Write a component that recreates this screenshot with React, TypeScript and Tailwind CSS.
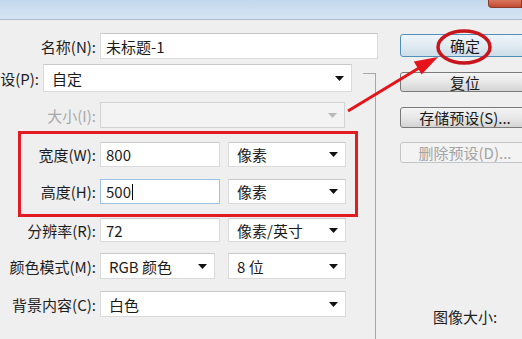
import React from "react";

const Arrow = ({ disabled = false }: { disabled?: boolean }) => (
  <svg width="9" height="5" viewBox="0 0 9 5" className="shrink-0 mr-[1px]">
    <path d="M0 0 L9 0 L4.5 5 Z" fill={disabled ? "#b9b9b9" : "#111"} />
  </svg>
);

const Input = ({ value, w, focused = false, h = "h-[25px]" }: { value: string; w: string; focused?: boolean; h?: string }) => (
  <div
    className={`${w} ${h} bg-white border flex items-center pl-[5px] text-[15px] text-[#1b1b1b] ${
      focused ? "border-[#9cc3e6] bg-[#fbfdff]" : "border-[#dadada] border-t-[#c9c9c9]"
    }`}
  >
    <span>{value}</span>
    {focused && <span className="w-px h-[16px] bg-black ml-px" />}
  </div>
);

const Select = ({ value, w, h = "h-[25px]", disabled = false }: { value: string; w: string; h?: string; disabled?: boolean }) => (
  <div
    className={`${w} ${h} border flex items-center justify-between pl-[8px] pr-[6px] text-[15px] ${
      disabled ? "bg-[#f3f3f3] border-[#d3d3d3] text-[#a0a0a0]" : "bg-white border-[#dadada] border-t-[#c9c9c9] text-[#1b1b1b]"
    }`}
  >
    <span className="whitespace-nowrap">{value}</span>
    <Arrow disabled={disabled} />
  </div>
);

const Label = ({ text, w, disabled = false }: { text: string; w: string; disabled?: boolean }) => (
  <div className={`${w} shrink-0 flex justify-end pr-[4px] whitespace-nowrap text-[15px] ${disabled ? "text-[#a8a8a8]" : "text-[#1e1e1e]"}`}>
    <span className="whitespace-nowrap">{text}</span>
  </div>
);

const Button = ({ text, h, variant = "normal", mt }: { text: string; h: string; variant?: "default" | "normal" | "disabled"; mt: string }) => {
  const cls =
    variant === "default"
      ? "border-[#4f90b8] bg-gradient-to-b from-[#eef5fa] via-[#e1ebf2] to-[#cfdde7] text-[#1a1a1a]"
      : variant === "disabled"
      ? "border-[#c3c6c8] bg-[#f3f3f3] text-[#a3a3a3]"
      : "border-[#7a7a7a] bg-gradient-to-b from-[#f4f4f4] via-[#e8e8e8] to-[#d4d4d4] text-[#1a1a1a]";
  return (
    <div className={`${mt} ${h} w-[130px] border rounded-[3px] flex items-center justify-center text-[15px] whitespace-nowrap ${cls}`}>
      {text}
    </div>
  );
};

export default function App() {
  return (
    <div className="relative w-[522px] h-[339px] overflow-hidden bg-[#efefef] font-['Noto_Sans_CJK_SC','Microsoft_YaHei',sans-serif] leading-none">
      {/* title bar */}
      <div className="h-[20px] bg-gradient-to-b from-[#c3d8ec] to-[#d5e4f2] border-b border-[#a9bccf] flex justify-end">
        <div className="w-[34px] h-[8px] bg-gradient-to-b from-[#d9765d] to-[#c2492f] border border-t-0 border-[#8a3a2a] rounded-bl-[4px]" />
      </div>

      <div className="flex pt-[13px]">
        {/* left column */}
        <div className="w-[378px] flex flex-col">
          {/* name row */}
          <div className="flex items-center">
            <Label text="名称(N):" w="w-[100px]" />
            <Input value="未标题-1" w="w-[278px]" h="h-[26px]" />
          </div>

          <div className="flex">
            <div className="w-[363px] flex flex-col">
              {/* preset */}
              <div className="flex items-center mt-[5px]">
                <Label text="预设(P):" w="w-[43px]" />
                <Select value="自定" w="w-[309px]" h="h-[28px]" />
              </div>
              {/* size */}
              <div className="flex items-center mt-[10px]">
                <Label text="大小(I):" w="w-[100px]" disabled />
                <Select value="" w="w-[245px]" h="h-[26px]" disabled />
              </div>

              {/* red box */}
              <div className="mt-[3px] ml-[18px] w-[340px] border-[3px] border-[#e31b22] pt-[8px] pb-[10px] flex flex-col gap-[12px]">
                <div className="flex items-center">
                  <Label text="宽度(W):" w="w-[79px]" />
                  <Input value="800" w="w-[120px]" />
                  <div className="ml-[8px]">
                    <Select value="像素" w="w-[118px]" />
                  </div>
                </div>
                <div className="flex items-center">
                  <Label text="高度(H):" w="w-[79px]" />
                  <Input value="500" w="w-[120px]" focused />
                  <div className="ml-[8px]">
                    <Select value="像素" w="w-[118px]" />
                  </div>
                </div>
              </div>

              {/* resolution */}
              <div className="flex items-center mt-[1px]">
                <Label text="分辨率(R):" w="w-[100px]" />
                <Input value="72" w="w-[120px]" h="h-[24px]" />
                <div className="ml-[8px]">
                  <Select value="像素/英寸" w="w-[118px]" h="h-[24px]" />
                </div>
              </div>
              {/* color mode */}
              <div className="flex items-center mt-[11px]">
                <Label text="颜色模式(M):" w="w-[100px]" />
                <Select value="RGB 颜色" w="w-[115px]" h="h-[26px]" />
                <div className="ml-[13px]">
                  <Select value="8 位" w="w-[118px]" h="h-[26px]" />
                </div>
              </div>
              {/* background */}
              <div className="flex items-center mt-[12px]">
                <Label text="背景内容(C):" w="w-[100px]" />
                <Select value="白色" w="w-[246px]" h="h-[26px]" />
              </div>
            </div>
            {/* group divider */}
            <div className="w-[13px] mt-[14px] h-[300px] border-t border-r border-[#a7a7a7]" />
          </div>
        </div>

        {/* right column */}
        <div className="ml-[22px] flex flex-col w-[130px]">
          <Button text="确定" h="h-[23px]" variant="default" mt="mt-[1px]" />
          <Button text="复位" h="h-[20px]" mt="mt-[15px]" />
          <Button text="存储预设(S)..." h="h-[21px]" mt="mt-[15px]" />
          <Button text="删除预设(D)..." h="h-[21px]" variant="disabled" mt="mt-[14px]" />
          <div className="mt-[146px] text-center text-[15px] text-[#1e1e1e]">图像大小:</div>
        </div>
      </div>

      {/* annotations */}
      <svg className="absolute inset-0 pointer-events-none" width="522" height="339" viewBox="0 0 522 339">
        <ellipse cx="464" cy="47" rx="26" ry="16" fill="none" stroke="#c8151b" strokeWidth="3.5" />
        <line x1="348" y1="111" x2="424" y2="65" stroke="#e5141b" strokeWidth="3" />
        <path d="M438 57 L421.6 74.5 L413.8 61.5 Z" fill="#e5141b" />
      </svg>
    </div>
  );
}
